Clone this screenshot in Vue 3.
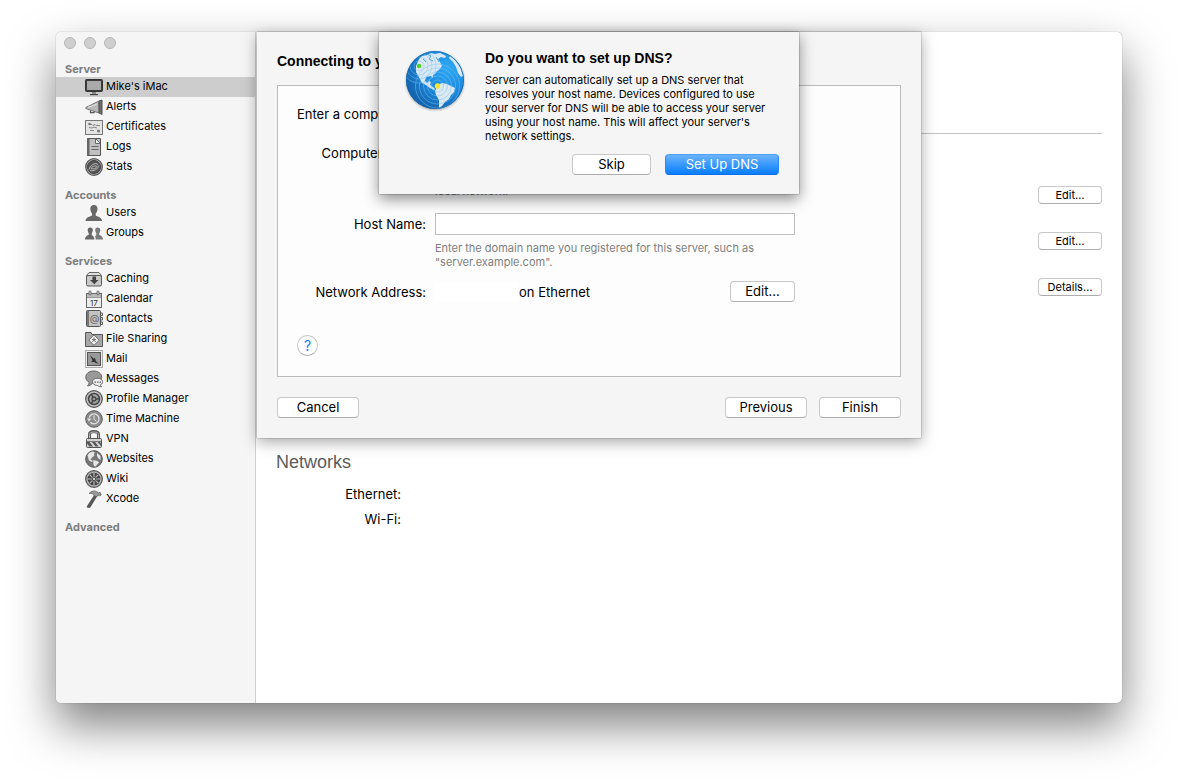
<script setup>
import { ref } from "vue";

const selected = ref("Mike's iMac");
const hostName = ref("");
const computerName = ref("");

// 18x18 sidebar glyphs
const icons = {
  imac: `<rect x=".5" y="1.5" width="17" height="12" rx="1" fill="#3c3c3c" stroke="#333"/><rect x="2" y="3" width="14" height="9" fill="#a9a9a9"/><path d="M7 14h4v2H7z" fill="#888"/><path d="M5 16h8v1.2H5z" fill="#444"/>`,
  alerts: `<path d="M.8 9.5 14 3v12L.8 10.5z" fill="#b8b8b8" stroke="#777"/><path d="M14 3 17 2v14.500l-3-1.500z" fill="#6a6a6a" stroke="#555"/><path d="M5.500 12.200v2.500h3.500v-1.300" fill="none" stroke="#555" stroke-width="1.300"/><path d="M3 9.300 12 6" stroke="#e2e2e2"/>`,
  certificates: `<rect x=".5" y="2.500" width="17" height="14" fill="#e3e3e3" stroke="#777"/><path d="M4 6.500h3l1 1 2-1 1 1h4M4 9.500l3 .5 2-.8 3 .8M5 12.500h4" fill="none" stroke="#888"/><circle cx="13.500" cy="13" r="1.500" fill="#777"/><circle cx="4.500" cy="6" r="1.300" fill="#777"/>`,
  logs: `<path d="M2.500.5h13v17h-13z" fill="#c0c0c0" stroke="#555"/><path d="M2 .5h2.500v17H2z" fill="#666"/><path d="M10.500.5v5h5z" fill="#f0f0f0" stroke="#666"/><path d="M6.500 8.500h7M6.500 11.500h7" stroke="#666"/>`,
  stats: `<circle cx="9" cy="9" r="8.300" fill="#aaa" stroke="#555" stroke-width="1.200"/><circle cx="9" cy="9" r="6.500" fill="#555" stroke="#444"/><path d="M4 11.500C5 7.500 10 4 13 6.500M5 12.500c4 1 8-1.500 9-5M6 10.500c1-2 4-3.500 6-2-1 2-3.500 3-6 2z" fill="none" stroke="#bbb"/>`,
  users: `<path d="M9 1c-2.700 0-3.900 2-3.700 4.300.2 2 1 3.200 1.700 4.200v2C5.500 12.700.8 12.800.5 17h16.500c-.3-4.200-5-4.300-6.300-5.500v-2c.8-1 1.700-2.200 1.800-4.200C12.700 3 11.600 1 9 1z" fill="#686868"/>`,
  groups: `<path d="M5.200 3.500c-1.800 0-2.600 1.300-2.500 3 .1 1.300.6 2 1.100 2.700v1.600C3 11.600.2 11.500 0 15.500h9.500c-.2-3-1.700-3.700-2.800-4.500V9.200c.5-.7 1-1.400 1.100-2.700.1-1.700-.8-3-2.600-3z" fill="#686868"/><path d="M12.700 3.500c-1.800 0-2.600 1.300-2.500 3 .1 1.300.6 2 1.100 2.700V11c-.5.400-1 .8-1.300 1.500.5.800.7 1.800.7 3H18c-.2-4-3-3.900-3.800-4.700V9.200c.5-.7 1-1.400 1.100-2.700.1-1.700-.8-3-2.600-3z" fill="#7b7b7b"/>`,
  caching: `<path d="M4 2.500h10l2.500 3V8h-15V5.500z" fill="#ddd" stroke="#666"/><rect x="1.500" y="5.500" width="15" height="10.500" rx="1.500" fill="#c9c9c9" stroke="#5a5a5a"/><path d="M7.500 6.500h3.500V10h2.500l-4.200 4.200L5 10h2.500z" fill="#444"/>`,
  calendar: `<rect x="1.500" y="3.500" width="15" height="14" fill="#ededed" stroke="#666"/><path d="M2 4h14v3H2z" fill="#bbb"/><path d="M2 7.500h14" stroke="#999"/><rect x="4" y="1" width="2" height="4" rx="1" fill="#ddd" stroke="#666"/><rect x="12" y="1" width="2" height="4" rx="1" fill="#ddd" stroke="#666"/><text x="9" y="15.500" text-anchor="middle" font-size="8" fill="#333">17</text>`,
  contacts: `<rect x="1.500" y=".5" width="14" height="16" rx="1" fill="#c2c2c2" stroke="#555"/><path d="M2 1h2v15H2z" fill="#777"/><path d="M16 3h1.500v2.500H16M16 7.500h1.500V10H16M16 12h1.500v2.500H16" fill="#ddd" stroke="#666"/><text x="9.500" y="11.500" text-anchor="middle" font-size="10" fill="#666">@</text>`,
  files: `<path d="M.5 4.500v-2h5.500l1 2h10.500v12H.5z" fill="#a8a8a8" stroke="#555"/><path d="m9 4.800 5.300 5.300L9 15.400l-5.300-5.300z" fill="#f0f0f0" stroke="#666"/><path d="M9 7.500v2M7.500 12 9 9.500l1.500 2.500M7 9.500h4" fill="none" stroke="#777"/>`,
  mail: `<rect x=".5" y=".5" width="17" height="17" fill="#eee" stroke="#666" stroke-dasharray="1 1"/><rect x="2.500" y="2.500" width="13" height="13" fill="#999" stroke="#555"/><path d="M5 5l3.500 3.500 1.500-.5 1 3.500 3 2-3-.3-1.500-1.200H6l1.500-1.500z" fill="#333"/>`,
  messages: `<path d="M8.500 1C4 1 .8 3.600.8 7.200c0 2.400 1.400 4.200 3.500 5.200-.2 1.500-.9 2.600-1.800 3.400 2.300 0 3.800-.8 4.900-2.500 5 0 9.300-2 9.300-6.100C16.700 3.600 13 1 8.500 1z" fill="#999" stroke="#666"/><path d="M12.500 8.200c-3 0-5 1.500-5 3.600s2 3.500 4.300 3.500c.9 0 1.800 1.500 4.800 1.500-.8-.7-1-1.400-1-2.100 1.300-.6 1.900-1.600 1.900-2.900 0-2.100-2-3.600-5-3.600z" fill="#f0f0f0" stroke="#666"/><path d="M9.500 11.500H11v1.300H9.500zM12 11.500h1.500v1.300H12zM14.500 11.500H16v1.300h-1.500z" fill="#555"/>`,
  profile: `<circle cx="9" cy="9" r="8.300" fill="#c0c0c0" stroke="#555" stroke-width="1.200"/><circle cx="9" cy="9" r="5.500" fill="#aaa" stroke="#444" stroke-width="1.500"/><circle cx="9" cy="9" r="2" fill="#999" stroke="#444" stroke-width="1.300"/><path d="M8 7.500 6.500 4.500M11 9h3M8 10.500l-1.500 3" stroke="#444" stroke-width="1.500"/>`,
  time: `<circle cx="9" cy="9" r="8.300" fill="#8c8c8c" stroke="#5a5a5a"/><path d="M4.200 10a5 5 0 1 0 1.300-4.500" fill="none" stroke="#e2e2e2" stroke-width="1.200" transform="rotate(-30 9 9)"/><path d="m2 8.500 2 3 2.500-3z" fill="#e2e2e2"/><path d="M9 5.500V9.300l2.500 2" fill="none" stroke="#e8e8e8"/>`,
  vpn: `<path d="M4.500 9V4.500C4.500 2.300 6 1.500 9 1.500s4.500.8 4.500 3V9" fill="none" stroke="#555" stroke-width="3"/><path d="M4.500 9V4.500C4.500 2.800 6 2 9 2s4.500.8 4.500 2.500V9" fill="none" stroke="#bbb"/><rect x="1.500" y="8.500" width="15" height="9" rx="1" fill="#d2d2d2" stroke="#555"/><path d="M2 11.500h14" stroke="#777"/><path d="M2 12h2.500l3.500 4.500H4.500L2 13.500zM7 12h3l3.500 4.500h-3zM12.500 12H15l1 1.500v2.500z" fill="#555"/>`,
  websites: `<circle cx="9" cy="9" r="8.300" fill="#777" stroke="#555"/><path d="M2.500 5C4 2.800 6 1.600 8.500 1.500L10 3 8.500 4l1 1.500L7 7.500 5.500 9.500 8 11l-1 1-3-1.500zM8.500 10l4 1 1.500 1.500-3.500 4-1.500-.5-.8-3zM12 3l3.500 3v4L13 8l-1-2.500z" fill="#e6e6e6"/>`,
  wiki: `<circle cx="9" cy="9" r="8.300" fill="#b0b0b0" stroke="#555" stroke-width="1.200"/><circle cx="9" cy="9" r="6.300" fill="#444"/><path d="M9 3v12M3 9h12M4.800 4.800l8.400 8.400M13.200 4.800l-8.400 8.400" stroke="#bbb" stroke-width="1.200"/><circle cx="9" cy="9" r="1.800" fill="#ccc" stroke="#444"/>`,
  xcode: `<path d="M9.500 5 12 6 5 17.500H2.500l-.5-1z" fill="#555" stroke="#444" stroke-width=".5"/><path d="M4 3.500C6.500.8 9.500.5 11.500 1.500l2 1.500 1.500-.8 1.300 2.800-1.800.8-1.500-.8-1.500 2-2.500-1.300C8.500 4 7 3 4 3.500z" fill="#999" stroke="#555" stroke-width=".7"/>`,
};

const groups = [
  {
    title: "Server",
    items: [
      { name: "Mike's iMac", icon: "imac" },
      { name: "Alerts", icon: "alerts" },
      { name: "Certificates", icon: "certificates" },
      { name: "Logs", icon: "logs" },
      { name: "Stats", icon: "stats" },
    ],
  },
  {
    title: "Accounts",
    items: [
      { name: "Users", icon: "users" },
      { name: "Groups", icon: "groups" },
    ],
  },
  {
    title: "Services",
    items: [
      { name: "Caching", icon: "caching" },
      { name: "Calendar", icon: "calendar" },
      { name: "Contacts", icon: "contacts" },
      { name: "File Sharing", icon: "files" },
      { name: "Mail", icon: "mail" },
      { name: "Messages", icon: "messages" },
      { name: "Profile Manager", icon: "profile" },
      { name: "Time Machine", icon: "time" },
      { name: "VPN", icon: "vpn" },
      { name: "Websites", icon: "websites" },
      { name: "Wiki", icon: "wiki" },
      { name: "Xcode", icon: "xcode" },
    ],
  },
  { title: "Advanced", items: [] },
];

const settings = ["Edit…", "Edit…", "Details…"];
const networks = ["Ethernet:", "Wi-Fi:"];
</script>

<template>
  <div class="desktop">
    <div class="window">
      <aside class="sidebar">
        <div class="traffic-lights">
          <span v-for="n in 3" :key="n" class="light"></span>
        </div>
        <nav>
          <section v-for="group in groups" :key="group.title" class="group">
            <h2 class="group-title">{{ group.title }}</h2>
            <a
              v-for="item in group.items"
              :key="item.name"
              href="#"
              class="nav-item"
              :class="{ active: item.name === selected }"
              @click.prevent="selected = item.name"
            >
              <svg class="nav-icon" viewBox="0 0 18 18" aria-hidden="true" v-html="icons[item.icon]"></svg>
              <span>{{ item.name }}</span>
            </a>
          </section>
        </nav>
      </aside>

      <main class="content">
        <div class="content-header"></div>
        <div class="settings">
          <button v-for="(label, index) in settings" :key="index" class="btn small">{{ label }}</button>
        </div>
        <h1 class="heading">Networks</h1>
        <ul class="networks">
          <li v-for="network in networks" :key="network">{{ network }}</li>
        </ul>
      </main>

      <!-- setup assistant sheet -->
      <section class="sheet">
        <h2 class="title">Connecting to your</h2>
        <form class="panel" @submit.prevent>
          <p class="intro">Enter a computer name</p>
          <div class="fields">
            <label for="computer">Computer Name:</label>
            <input id="computer" v-model="computerName" type="text" />
            <p class="hint">The name users will see on the<br />local network.</p>
            <label for="host">Host Name:</label>
            <input id="host" v-model="hostName" type="text" />
            <p class="hint last">Enter the domain name you registered for this server, such as<br />"server.example.com".</p>
            <span class="label">Network Address:</span>
            <div class="address">
              <span class="ip"></span>
              <span>on Ethernet</span>
              <button type="button" class="btn edit">Edit…</button>
            </div>
          </div>
          <button type="button" class="help" aria-label="Help">?</button>
        </form>
        <div class="actions">
          <button class="btn wide">Cancel</button>
          <span class="spacer"></span>
          <button class="btn wide">Previous</button>
          <button class="btn wide">Finish</button>
        </div>
      </section>

      <!-- confirmation on top of the sheet -->
      <section class="alert" role="dialog" aria-labelledby="alert-title">
        <svg class="globe" viewBox="0 0 60 60" aria-hidden="true">
          <defs>
            <radialGradient id="sea" cx=".72" cy=".3" r=".8">
              <stop offset="0" stop-color="#2fa9f5" />
              <stop offset=".5" stop-color="#1c8be0" />
              <stop offset="1" stop-color="#135fa8" />
            </radialGradient>
            <clipPath id="disc"><circle cx="30" cy="30" r="29" /></clipPath>
          </defs>
          <circle cx="30" cy="30" r="29" fill="url(#sea)" />
          <g clip-path="url(#disc)">
            <path d="M14 9l3-3 5-1 4-2 4 1 5-1 6 3-1 2-4-1-3 2 2 3 2 4-3 4-2 1-2 3-2 1v3l-2-2-5 1-1 4 2 2 2-2 2 1-1 3 3 2 2 2-1 1-4-2-4-3-4-2-2-4-4-7 0-6z" fill="#dce9f3" />
            <path d="M33 35l4-2 5 1 4 2 4 2-1 4-3 3-2 4-4 3-3 4-3 2v-8l-3-5-1-4z" fill="#dce9f3" />
            <path d="M45 6l4 3 4 5 3 5 2 7-2 1-3-4-2-6-3-5-4-4z" fill="#dce9f3" />
            <path d="M22 4l4 2-2 3 4 2M31 7l3 5M18 9l3 3" fill="none" stroke="#4ba3df" />
            <g fill="none" stroke="#7cc4f2" opacity=".5">
              <circle cx="14" cy="16" r="5" />
              <circle cx="14" cy="16" r="9" />
              <circle cx="14" cy="16" r="13" />
              <circle cx="14" cy="16" r="17" />
              <circle cx="32.500" cy="36" r="6" />
              <circle cx="32.500" cy="36" r="10" />
              <circle cx="32.500" cy="36" r="14" />
              <circle cx="32.500" cy="36" r="18" />
              <circle cx="32.500" cy="36" r="22" />
            </g>
          </g>
          <circle cx="14" cy="16" r="2.200" fill="#45d71b" />
          <circle cx="32.500" cy="36" r="2.700" fill="#fbe622" />
          <circle cx="30" cy="30" r="28.500" fill="none" stroke="#1566ad" opacity=".7" />
        </svg>
        <div class="alert-body">
          <h2 id="alert-title" class="title">Do you want to set up DNS?</h2>
          <p class="message">
            Server can automatically set up a DNS server that<br />
            resolves your host name. Devices configured to use<br />
            your server for DNS will be able to access your server<br />
            using your host name. This will affect your server's<br />
            network settings.
          </p>
          <div class="alert-actions">
            <button class="btn skip">Skip</button>
            <button class="btn primary">Set Up DNS</button>
          </div>
        </div>
      </section>
    </div>
  </div>
</template>

<style>
body {
  margin: 0;
  background: #fff;
}
</style>

<style scoped>
* {
  box-sizing: border-box;
}

h1,
h2,
p,
ul {
  margin: 0;
  padding: 0;
}

.desktop {
  display: flex;
  min-height: 100vh;
  padding: 32px 56px 80px;
  font-family: Inter, "Liberation Sans", Arial, sans-serif;
  font-size: 13px;
  line-height: 16px;
  color: #000;
}

.window {
  position: relative;
  display: flex;
  flex: 1;
  background: #fff;
  border-radius: 5px;
  box-shadow: 0 0 1px rgba(0, 0, 0, 0.5), 0 22px 46px rgba(0, 0, 0, 0.5);
}

.sidebar {
  width: 200px;
  background: #f5f5f5;
  border-right: 1px solid #d0d0d0;
  border-radius: 5px 0 0 5px;
}

.traffic-lights {
  display: flex;
  gap: 8px;
  height: 29px;
  padding: 5px 8px;
}

.light {
  width: 12px;
  height: 12px;
  background: #cfcfcf;
  border: 1px solid #b5b5b5;
  border-radius: 50%;
}

.group {
  margin-bottom: 10px;
}

.group-title {
  padding-left: 9px;
  font-size: 11px;
  line-height: 16px;
  font-weight: bold;
  color: #7c7c7c;
}

.nav-item {
  display: flex;
  align-items: center;
  gap: 3px;
  height: 20px;
  padding-left: 29px;
  font-size: 11px;
  line-height: 18px;
  color: #000;
  text-decoration: none;
}

.nav-item span {
  height: 20px;
}

.nav-item.active {
  background: #cdcdcd;
}

.nav-icon {
  width: 18px;
  height: 18px;
}

.content {
  flex: 1;
  padding: 0 20px;
}

.content-header {
  height: 102px;
  border-bottom: 1px solid #c3c3c3;
}

.settings {
  display: flex;
  flex-direction: column;
  align-items: flex-end;
  gap: 28px;
  padding-top: 52px;
}

.heading {
  margin-top: 154px;
  font-family: "Liberation Sans", Arial, sans-serif;
  font-size: 18px;
  line-height: 24px;
  font-weight: normal;
  color: #5c5c5c;
}

.networks {
  width: 125px;
  margin-top: 8px;
  list-style: none;
  line-height: 25px;
  text-align: right;
}

.btn {
  height: 21px;
  padding: 0 8px;
  font-family: inherit;
  font-size: 13px;
  line-height: 19px;
  color: #000;
  background: #fff;
  border: 1px solid #c8c8c8;
  border-bottom-color: #adadad;
  border-radius: 4px;
}

.btn.small {
  width: 64px;
  height: 18px;
  padding: 0;
  font-size: 11px;
  line-height: 16px;
}

.sheet,
.alert {
  position: absolute;
  top: 0;
  left: 0;
  right: 0;
  margin: 0 auto;
  background: #f5f5f5;
}

.sheet {
  width: 664px;
  padding: 20px;
  box-shadow: 0 0 1px rgba(0, 0, 0, 0.7), 0 4px 14px rgba(0, 0, 0, 0.35);
}

.title {
  font-family: "Liberation Sans", Arial, sans-serif;
  font-size: 14px;
  line-height: 18px;
  font-weight: bold;
}

.panel {
  height: 292px;
  margin-top: 15px;
  padding: 19px;
  background: #fdfdfd;
  border: 1px solid #bbb;
}

.intro {
  line-height: 18px;
}

.fields {
  display: grid;
  grid-template-columns: 129px 360px;
  column-gap: 9px;
  margin-top: 19px;
}

.fields label,
.label {
  line-height: 22px;
  text-align: right;
}

.fields input {
  height: 22px;
  padding: 0 4px;
  font-family: inherit;
  font-size: 13px;
  background: #fff;
  border: 1px solid #bfbfbf;
}

.hint {
  grid-column: 2;
  margin: 6px 0 15px;
  font-size: 11px;
  line-height: 14px;
  color: #7f7f7f;
  white-space: nowrap;
}

.hint.last {
  margin-bottom: 12px;
}

.address {
  display: flex;
  align-items: center;
  height: 21px;
}

.ip {
  width: 84px;
  height: 18px;
  background: #fff;
}

.edit {
  width: 65px;
  margin-left: auto;
}

.help {
  display: block;
  width: 21px;
  height: 21px;
  margin-top: 32px;
  padding: 0;
  font-family: inherit;
  font-size: 14px;
  line-height: 19px;
  color: #0a7bff;
  background: #fff;
  border: 1px solid #c8c8c8;
  border-bottom-color: #adadad;
  border-radius: 50%;
}

.actions {
  display: flex;
  gap: 12px;
  margin-top: 20px;
}

.wide {
  width: 82px;
}

.spacer {
  flex: 1;
}

.alert {
  display: flex;
  width: 420px;
  padding: 17px 20px 19px 26px;
  box-shadow: 0 0 1px rgba(0, 0, 0, 0.8), 0 5px 14px rgba(0, 0, 0, 0.45);
}

.globe {
  width: 60px;
  height: 60px;
  margin: 1px 20px 0 0;
  filter: drop-shadow(0 1px 1px rgba(0, 0, 0, 0.3));
}

.alert-body {
  flex: 1;
}

.message {
  margin-top: 6px;
  font-size: 11px;
  line-height: 14px;
  white-space: nowrap;
}

.alert-actions {
  display: flex;
  justify-content: flex-end;
  gap: 14px;
  margin-top: 11px;
}

.skip {
  width: 79px;
}

.primary {
  width: 114px;
  color: #fff;
  background: linear-gradient(#6cb3fa, #087eff);
  border-color: #4ba0f8 #2a8af8 #0a6fe8;
}
</style>
